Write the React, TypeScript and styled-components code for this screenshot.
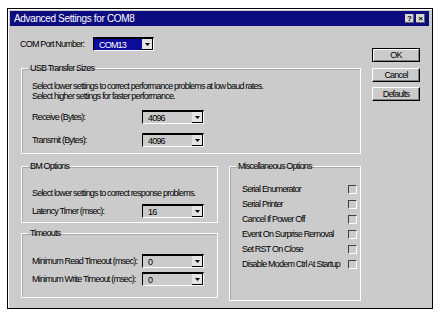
import React from 'react'
import styled, { createGlobalStyle } from 'styled-components'

const GlobalStyle = createGlobalStyle`
  html, body {
    margin: 0;
    padding: 0;
    background: #ffffff;
  }
  body {
    font-family: "Liberation Sans", Arial, sans-serif;
    font-size: 9px;
    letter-spacing: -0.8px;
    color: #000;
  }
`

const Window = styled.div`
  box-sizing: border-box;
  width: 426px;
  height: 301px;
  margin: 8px 0 0 7px;
  background: #cbcbcb;
  border: 1px solid #000;
  box-shadow: inset 1px 1px 0 #fff;
  display: flex;
  flex-direction: column;
`

const TitleBar = styled.div`
  height: 15px;
  margin: 2px 3px 0 2px;
  background: #0c0c80;
  color: #fff;
  font-size: 10px;
  letter-spacing: -0.35px;
  display: flex;
  align-items: center;
  padding: 0 4px 0 4px;
`

const TitleText = styled.span`
  flex: 1;
`

const TitleButton = styled.span`
  width: 9px;
  height: 9px;
  margin-left: 2px;
  background: #d8d8d8;
  color: #000;
  font-size: 8px;
  font-weight: bold;
  letter-spacing: 0;
  line-height: 9px;
  text-align: center;
  box-shadow: inset -1px -1px 0 #606060;
`

const Content = styled.div`
  display: flex;
  padding: 0 0 0 13px;
`

const LeftCol = styled.div`
  width: 340px;
  display: flex;
  flex-direction: column;
`

const ButtonCol = styled.div`
  width: 48px;
  margin-left: 11px;
  padding-top: 22px;
  display: flex;
  flex-direction: column;
`

const PushButton = styled.div<{ $default?: boolean; $gap: number }>`
  box-sizing: border-box;
  height: 14px;
  margin-top: ${({ $gap }) => $gap}px;
  display: flex;
  align-items: center;
  justify-content: center;
  border: 1px solid ${({ $default }) => ($default ? '#000' : '#fff')};
  border-right-color: #000;
  border-bottom-color: #000;
  box-shadow: ${({ $default }) =>
    $default ? 'inset 1px 1px 0 #fff, inset -1px -1px 0 #808080' : 'inset -1px -1px 0 #808080'};
`

const ComRow = styled.div`
  display: flex;
  align-items: center;
  margin-top: 11px;
  margin-left: -1px;
`

const Label = styled.span<{ $w?: number }>`
  width: ${({ $w }) => ($w ? `${$w}px` : 'auto')};
  white-space: nowrap;
`

const Combo = styled.div<{ $w: number; $selected?: boolean }>`
  box-sizing: border-box;
  width: ${({ $w }) => $w}px;
  height: 14px;
  display: flex;
  align-items: stretch;
  border-style: solid;
  border-width: 2px 1px 1px 1px;
  border-color: #000 #fff #fff #000;
  background: ${({ $selected }) => ($selected ? '#0c0c9a' : '#cbcbcb')};
  color: ${({ $selected }) => ($selected ? '#fff' : '#000')};
`

const ComboValue = styled.span`
  flex: 1;
  padding-left: 5px;
  display: flex;
  align-items: center;
`

const ComboButton = styled.span`
  box-sizing: border-box;
  width: 11px;
  background: #e4e4e4;
  border-right: 1px solid #000;
  border-bottom: 1px solid #000;
  display: flex;
  align-items: center;
  justify-content: center;
`

const Group = styled.fieldset<{ $h: number; $mt: number }>`
  box-sizing: border-box;
  margin: ${({ $mt }) => $mt}px 0 0 0;
  padding: 0 3px 0 10px;
  min-width: 0;
  height: ${({ $h }) => $h}px;
  border: 1px solid #fff;
  box-shadow: 1px 1px 0 #a8a8a8 inset;
`

const Legend = styled.legend`
  margin-left: -4px;
  padding: 0 2px;
  line-height: 11px;
`

const Para = styled.div<{ $mt: number }>`
  margin-top: ${({ $mt }) => $mt}px;
  line-height: 10px;
  white-space: nowrap;
`

const FieldRow = styled.div<{ $mt: number }>`
  display: flex;
  align-items: center;
  margin-top: ${({ $mt }) => $mt}px;
`

const LowerGrid = styled.div`
  display: grid;
  grid-template-columns: 197px 132px;
  column-gap: 11px;
`

const Stack = styled.div`
  display: flex;
  flex-direction: column;
`

const CheckRow = styled.div<{ $mt: number }>`
  display: flex;
  align-items: center;
  justify-content: space-between;
  margin-top: ${({ $mt }) => $mt}px;
  padding-left: 2px;
  white-space: nowrap;
`

const CheckBox = styled.span`
  box-sizing: border-box;
  width: 9px;
  height: 9px;
  border-style: solid;
  border-width: 1px;
  border-color: #404040 #fff #fff #404040;
`

const Arrow = () => (
  <svg width="5" height="3" viewBox="0 0 5 3">
    <polygon points="0,0 5,0 2.5,3" fill="#000" />
  </svg>
)

const Select = ({ value, w, selected }: { value: string; w: number; selected?: boolean }) => (
  <Combo $w={w} $selected={selected}>
    <ComboValue>{value}</ComboValue>
    <ComboButton>
      <Arrow />
    </ComboButton>
  </Combo>
)

const miscOptions = [
  'Serial Enumerator',
  'Serial Printer',
  'Cancel If Power Off',
  'Event On Surprise Removal',
  'Set RST On Close',
  'Disable Modem Ctrl At Startup',
]

const App = () => (
  <>
    <GlobalStyle />
    <Window>
      <TitleBar>
        <TitleText>Advanced Settings for COM8</TitleText>
        <TitleButton>?</TitleButton>
        <TitleButton>×</TitleButton>
      </TitleBar>
      <Content>
        <LeftCol>
          <ComRow>
            <Label $w={73}>COM Port Number:</Label>
            <Select value="COM13" w={61} selected />
          </ComRow>

          <Group $h={91} $mt={12}>
            <Legend>USB Transfer Sizes</Legend>
            <Para $mt={7}>
              Select lower settings to correct performance problems at low baud rates.
              <br />
              Select higher settings for faster performance.
            </Para>
            <FieldRow $mt={9}>
              <Label $w={110}>Receive (Bytes):</Label>
              <Select value="4096" w={62} />
            </FieldRow>
            <FieldRow $mt={9}>
              <Label $w={110}>Transmit (Bytes):</Label>
              <Select value="4096" w={62} />
            </FieldRow>
          </Group>

          <LowerGrid>
            <Stack>
              <Group $h={62} $mt={7}>
                <Legend>BM Options</Legend>
                <Para $mt={16}>Select lower settings to correct response problems.</Para>
                <FieldRow $mt={6}>
                  <Label $w={110}>Latency Timer (msec):</Label>
                  <Select value="16" w={62} />
                </FieldRow>
              </Group>
              <Group $h={70} $mt={5}>
                <Legend>Timeouts</Legend>
                <FieldRow $mt={15}>
                  <Label $w={110}>Minimum Read Timeout (msec):</Label>
                  <Select value="0" w={62} />
                </FieldRow>
                <FieldRow $mt={4}>
                  <Label $w={110}>Minimum Write Timeout (msec):</Label>
                  <Select value="0" w={62} />
                </FieldRow>
              </Group>
            </Stack>
            <Group $h={140} $mt={7}>
              <Legend>Miscellaneous Options</Legend>
              {miscOptions.map((opt, i) => (
                <CheckRow key={opt} $mt={i === 0 ? 12 : 5}>
                  <span>{opt}</span>
                  <CheckBox />
                </CheckRow>
              ))}
            </Group>
          </LowerGrid>
        </LeftCol>

        <ButtonCol>
          <PushButton $default $gap={0}>OK</PushButton>
          <PushButton $gap={6}>Cancel</PushButton>
          <PushButton $gap={5}>Defaults</PushButton>
        </ButtonCol>
      </Content>
    </Window>
  </>
)

export default App
